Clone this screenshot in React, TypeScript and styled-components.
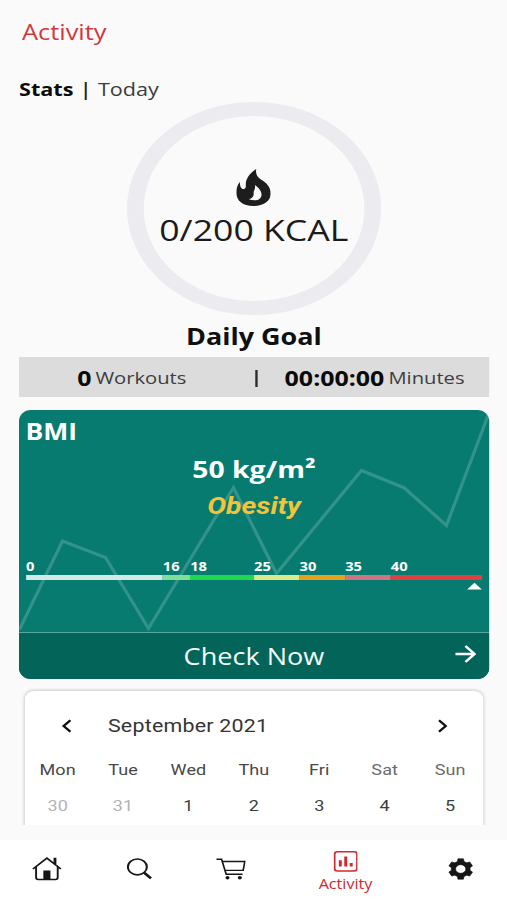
import React from "react";
import styled, { createGlobalStyle } from "styled-components";

const Global = createGlobalStyle`
  * { box-sizing: border-box; }
  html, body { margin: 0; padding: 0; background: #fafafa; overflow: hidden; }
`;

const Screen = styled.div`
  width: 427px;
  height: 900px;
  transform: scaleX(1.18735);
  transform-origin: 0 0;
  display: flex;
  flex-direction: column;
  background: #fafafa;
  color: #151515;
  font-family: "Open Sans", "Noto Sans", sans-serif;
  white-space: nowrap;
`;

const Content = styled.main`
  flex: none;
  height: 824.5px;
  overflow: hidden;
  display: flex;
  flex-direction: column;
`;

const Title = styled.h1`
  flex: none;
  margin: 0;
  padding-left: 18.5px;
  height: 63px;
  font-size: 21.4px;
  font-weight: 400;
  line-height: 63px;
  color: #d3383c;
`;

const StatsLine = styled.div`
  flex: none;
  display: flex;
  margin: 14px 0 0 16px;
  height: 25px;
  line-height: 24.8px;
  font-size: 18.2px;
  color: #3c3c3c;
  b { color: #0c0c0c; }
  span { color: #222; font-weight: 600; width: 20.6px; text-align: center; }
`;

const Ring = styled.div`
  flex: none;
  width: 213.5px;
  height: 213px;
  margin-left: 107px;
  border: 14.2px solid #ebebf0;
  border-radius: 50%;
  display: flex;
  flex-direction: column;
  align-items: center;
  padding-top: 52.8px;
  svg { display: block; width: 29px; height: 37px; flex: none; }
`;

const Kcal = styled.div`
  font-size: 30px;
  line-height: 47.6px;
  color: #1b1b1b;
`;

const Goal = styled.div`
  flex: none;
  height: 42px;
  line-height: 43px;
  font-size: 22.7px;
  font-weight: 700;
  text-align: center;
  text-indent: 0.6px;
  color: #101010;
`;

const Totals = styled.div`
  flex: none;
  margin: 0 14.8px 0 15.6px;
  height: 40px;
  background: #dcdcdc;
  display: grid;
  grid-template-columns: 190.8px 18.4px 1fr;
  align-items: center;
  padding-right: 6px;
`;

const Total = styled.div`
  display: flex;
  justify-content: center;
  align-items: center;
  gap: 3.4px;
  font-size: 17px;
  line-height: 41px;
  color: #3e3e3e;
  b { font-size: 21px; line-height: 40px; color: #0a0a0a; }
`;

const Bar = styled.i`
  width: 1.9px;
  height: 17px;
  margin: 1px auto 0;
  background: #2b2b2b;
`;

const BmiCard = styled.section`
  flex: none;
  position: relative;
  margin: 13.4px 14.8px 0 15.6px;
  height: 269px;
  border-radius: 10px / 11px;
  overflow: hidden;
  background: #077b70;
  color: #fff;
  display: flex;
  flex-direction: column;
`;

const Trend = styled.svg`
  position: absolute;
  left: 0;
  top: 0;
  width: 100%;
  height: 222px;
`;

const BmiBody = styled.div`
  flex: none;
  position: relative;
  height: 221.3px;
  padding: 0 6.4px;
`;

const BmiName = styled.div`
  height: 41px;
  font-size: 22.3px;
  font-weight: 700;
  line-height: 43px;
  text-indent: -0.6px;
`;

const BmiValue = styled.div`
  height: 36.5px;
  font-size: 23.8px;
  font-weight: 700;
  line-height: 37.5px;
  text-align: center;
`;

const BmiClass = styled.div`
  height: 36px;
  font-family: Roboto, sans-serif;
  font-size: 23.8px;
  font-style: italic;
  font-weight: 700;
  line-height: 37px;
  text-align: center;
  color: #f4c33a;
`;

const Scale = styled.div`
  display: flex;
  margin-top: 34px;
`;

const Band = styled.div<{ $share: number; $color: string }>`
  flex: ${(p) => p.$share} 1 0;
  min-width: 0;
  font-size: 12.4px;
  font-weight: 700;
  line-height: 17px;
  &::after {
    content: "";
    display: block;
    height: 5.6px;
    margin-top: -0.2px;
    background: ${(p) => p.$color};
  }
`;

const Marker = styled.div`
  margin: 2.5px 0 0 auto;
  width: 12.4px;
  height: 6.8px;
  background: #fff;
  clip-path: polygon(50% 0, 100% 100%, 0 100%);
`;

const Check = styled.div`
  flex: 1;
  position: relative;
  border-top: 1.9px solid #58a69e;
  background: #03645a;
  display: grid;
  grid-template-columns: 60px 1fr 60px;
  align-items: center;
  justify-items: center;
  font-size: 22.8px;
  line-height: 45px;
  color: #f1fbfa;
  span { grid-column: 2; }
  svg { display: block; width: 18px; height: 18px; margin: -4px -18.6px 0 0; }
`;

const Calendar = styled.section`
  flex: none;
  margin: 11.4px 19.6px 0 21px;
  height: 180px;
  background: #fff;
  border-radius: 8px;
  box-shadow: 0 0 3px 0.5px rgba(0, 0, 0, 0.18);
  font-family: Roboto, sans-serif;
`;

const Month = styled.div`
  height: 70px;
  display: flex;
  align-items: center;
  padding: 0 30.6px 0 30.8px;
  font-size: 18px;
  letter-spacing: 0.2px;
  color: #343434;
  svg { display: block; width: 8px; height: 14px; }
  span { flex: 1; padding-left: 31.1px; line-height: 70px; }
`;

const Week = styled.div`
  display: grid;
  grid-template-columns: repeat(7, 55.1px);
  text-align: center;
  height: 36.5px;
`;

const Day = styled.span<{ $color: string }>`
  font-size: 15.2px;
  line-height: 19px;
  letter-spacing: 0.1px;
  color: ${(p) => p.$color};
`;

const Nav = styled.nav`
  margin-top: 15.5px;
  height: 60px;
  background: #fff;
  display: grid;
  grid-template-columns: 78px 78px 77.5px 115px 78px;
`;

const Tab = styled.div<{ $top: number }>`
  padding-top: ${(p) => p.$top}px;
  display: flex;
  flex-direction: column;
  align-items: center;
  font-size: 13.6px;
  font-weight: 500;
  line-height: 23px;
  color: #d3282c;
  svg { display: block; flex: none; }
`;

const bands: [string, number, string][] = [
  ["0", 30, "#d3e9e8"],
  ["16", 6, "#80de97"],
  ["18", 14, "#20d750"],
  ["25", 10, "#dbe98b"],
  ["30", 10, "#e8a11c"],
  ["35", 10, "#cd7583"],
  ["40", 20, "#e0413f"],
];

const weekdays = ["Mon", "Tue", "Wed", "Thu", "Fri", "Sat", "Sun"];
const dates = ["30", "31", "1", "2", "3", "4", "5"];

const gearPath = () => {
  const pts: string[] = [];
  for (let i = 0; i < 6; i++) {
    const base = (i * 60 - 90) * (Math.PI / 180);
    [[-20, 8], [-13, 10.4], [13, 10.4], [20, 8]].forEach(([a, r]) => {
      const t = base + (a * Math.PI) / 180;
      pts.push(`${(11 + r * Math.cos(t)).toFixed(2)} ${(11 + r * Math.sin(t)).toFixed(2)}`);
    });
  }
  return `M${pts.join("L")}ZM11 6.7a4.3 4.3 0 1 0 0 8.6a4.3 4.3 0 1 0 0-8.6Z`;
};

export default function App() {
  return (
    <>
      <Global />
      <Screen>
        <Content>
          <Title>Activity</Title>
          <StatsLine>
            <b>Stats</b>
            <span>|</span>
            Today
          </StatsLine>
          <Ring>
            <svg viewBox="0 0 105 109" preserveAspectRatio="none">
              <path
                fill="#1d1d1d"
                fillRule="evenodd"
                d="M61 0C58 14 63 23 75 31C93 41 105 54 105 72C105 95 82 109 52 109C20 109 0 93 0 69C0 57 3 47 11 38C11 48 13 56 19 59C26 61 30 56 29 48C28 29 40 12 61 0ZM57 47C59 59 52 64 53 72C54 80 49 87 38 89C60 97 75 90 77 77C78 65 69 56 57 47Z"
              />
            </svg>
            <Kcal>0/200 KCAL</Kcal>
          </Ring>
          <Goal>Daily Goal</Goal>
          <Totals>
            <Total><b>0</b>Workouts</Total>
            <Bar />
            <Total><b>00:00:00</b>Minutes</Total>
          </Totals>
          <BmiCard>
            <Trend viewBox="18.5 410.5 471 222" preserveAspectRatio="none">
              <polyline
                points="19,630 62,541.5 105,558 148,629 233,488 276,574 361,471 404,488.5 446,526 488,415"
                fill="none"
                stroke="#fff"
                strokeOpacity="0.18"
                strokeWidth="3.2"
              />
            </Trend>
            <BmiBody>
              <BmiName>BMI</BmiName>
              <BmiValue>50 kg/m²</BmiValue>
              <BmiClass>Obesity</BmiClass>
              <Scale>
                {bands.map(([label, share, color]) => (
                  <Band key={label} $share={share} $color={color}>{label}</Band>
                ))}
              </Scale>
              <Marker />
            </BmiBody>
            <Check>
              <span>Check Now</span>
              <svg viewBox="0 0 18 18" fill="none" stroke="#fff" strokeWidth="2.3">
                <path d="M0.6 9H16M9 1L16.6 9L9 17" />
              </svg>
            </Check>
          </BmiCard>
          <Calendar>
            <Month>
              <svg viewBox="0 0 8 14" fill="none" stroke="#111" strokeWidth="2.1">
                <path d="M7.3 1.2L1.6 7L7.3 12.8" />
              </svg>
              <span>September 2021</span>
              <svg viewBox="0 0 8 14" fill="none" stroke="#111" strokeWidth="2.1">
                <path d="M0.7 1.2L6.4 7L0.7 12.8" />
              </svg>
            </Month>
            <Week>
              {weekdays.map((d, i) => (
                <Day key={d} $color={i > 4 ? "#6b6b6b" : "#484848"}>{d}</Day>
              ))}
            </Week>
            <Week>
              {dates.map((d, i) => (
                <Day key={d} $color={i < 2 ? "#b2b2b2" : "#3d3d3d"}>{d}</Day>
              ))}
            </Week>
          </Calendar>
        </Content>
        <Nav>
          <Tab $top={17}>
            <svg width="25" height="24" viewBox="0 0 25 24" fill="none" stroke="#161616" strokeWidth="1.6">
              <path d="M0.7 12L12.5 1.2L24.3 12M3.4 10V20.6Q3.4 22.5 5.2 22.5H19.8Q21.6 22.5 21.6 20.6V10" />
              <path d="M19.3 0.8V7" strokeWidth="2.4" />
              <path d="M9.5 13.5H15.5V22.5H9.5Z" fill="#161616" stroke="none" />
            </svg>
          </Tab>
          <Tab $top={18}>
            <svg width="21" height="22" viewBox="0 0 21 22" fill="none" stroke="#161616">
              <ellipse cx="8.7" cy="8.9" rx="8" ry="7.9" strokeWidth="1.7" />
              <path d="M14.3 14.6L20.2 20.4" strokeWidth="2.6" />
            </svg>
          </Tab>
          <Tab $top={17.5}>
            <svg width="25" height="22" viewBox="0 0 25 22" fill="none" stroke="#161616" strokeWidth="1.4">
              <path d="M0.3 1.2H4.6L8.5 16.3H22.3M5.6 3.5H24.2L22.8 12.4H7.6" />
              <circle cx="9.6" cy="19.8" r="1.7" fill="#161616" stroke="none" />
              <circle cx="20" cy="19.8" r="1.7" fill="#161616" stroke="none" />
            </svg>
          </Tab>
          <Tab $top={11}>
            <svg width="20.5" height="21" viewBox="0 0 20.5 21" fill="none" stroke="#d3282c">
              <rect x="0.8" y="0.8" width="18.9" height="19.2" rx="2.4" strokeWidth="1.6" />
              <path d="M5.6 9.3V15.6M10.2 5.6V15.6M14.8 12V15.6" strokeWidth="2.5" />
            </svg>
            <span>Activity</span>
          </Tab>
          <Tab $top={17.5}>
            <svg width="22" height="22" viewBox="0 0 22 22">
              <path d={gearPath()} fill="#161616" fillRule="evenodd" stroke="#161616" strokeWidth="0.6" strokeLinejoin="round" />
            </svg>
          </Tab>
        </Nav>
      </Screen>
    </>
  );
}
